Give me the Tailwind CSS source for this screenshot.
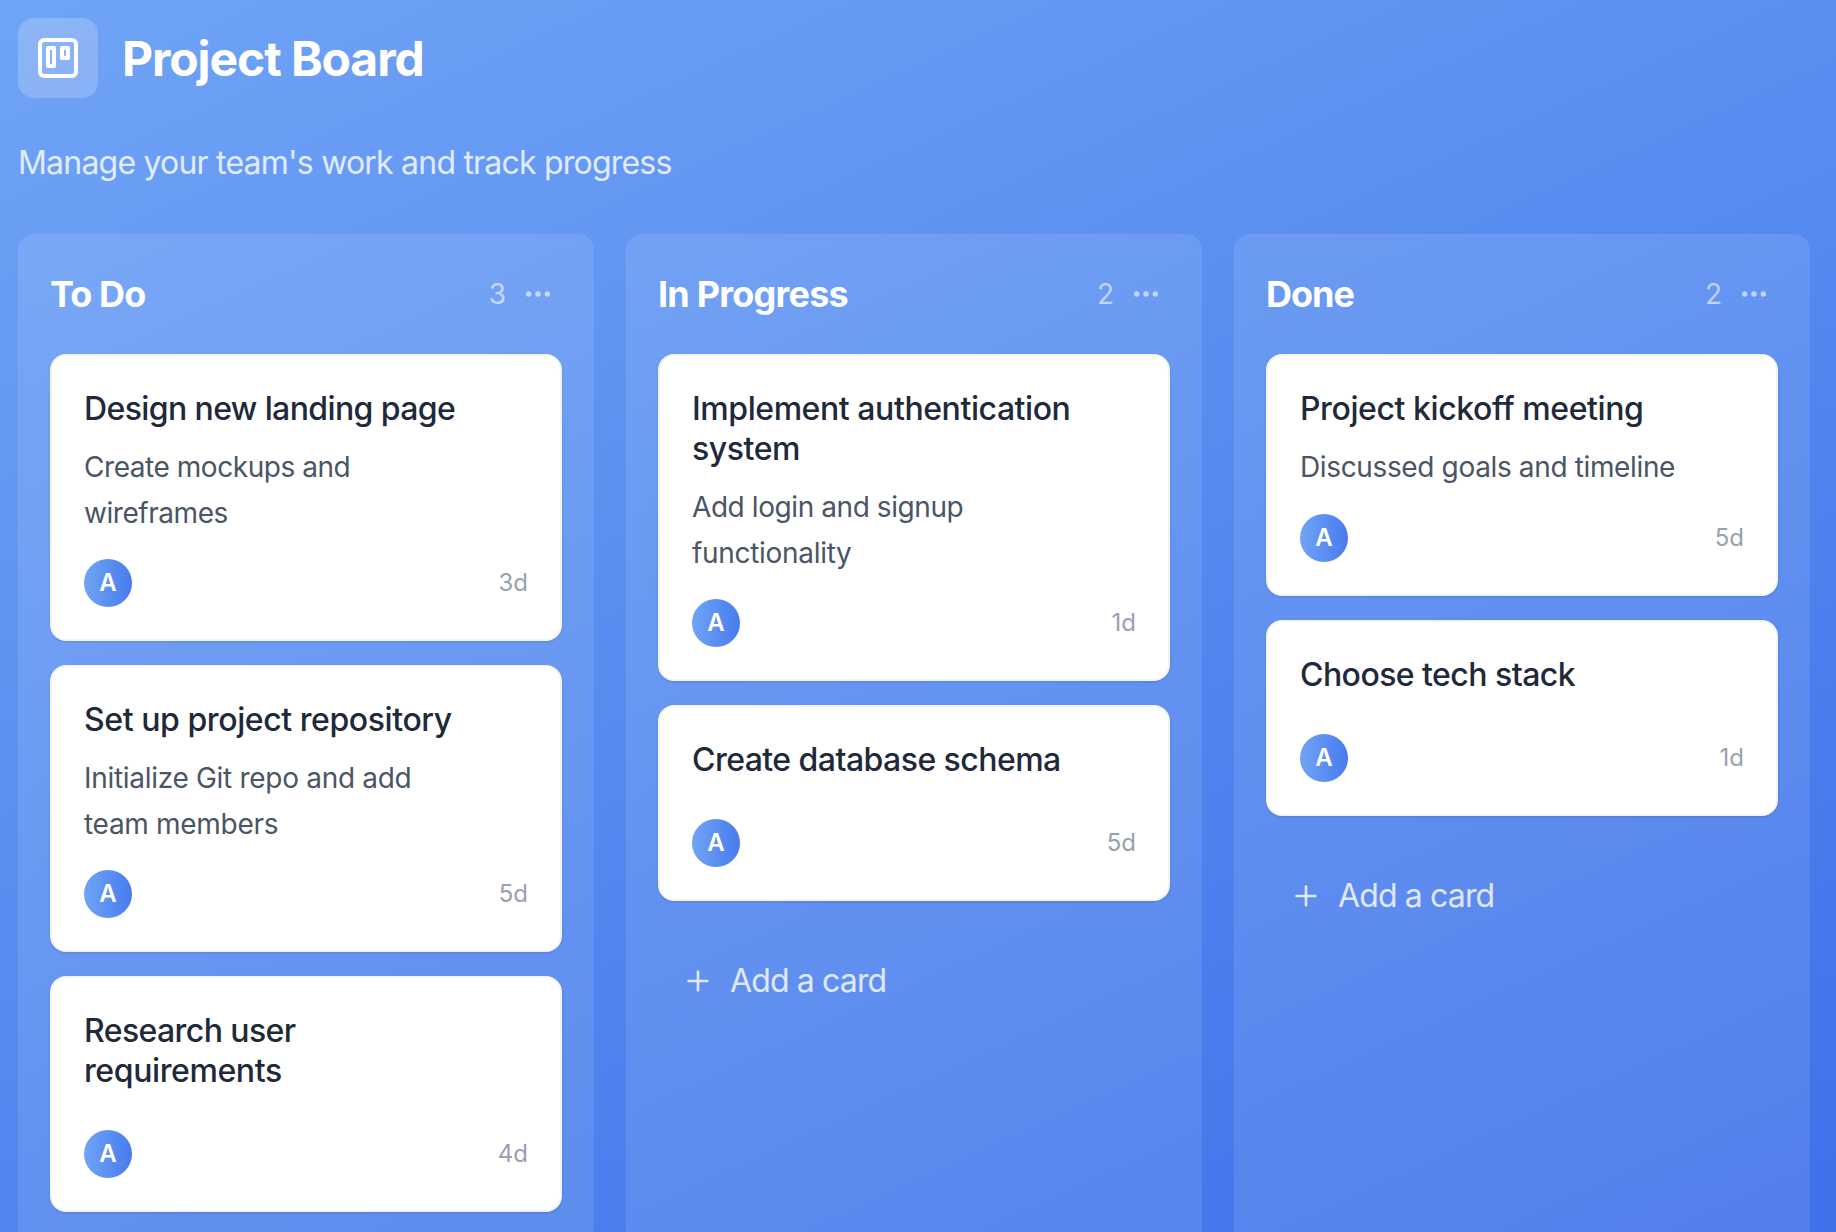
<!DOCTYPE html>
<html lang="en">
<head>
<meta charset="utf-8">
<title>Project Board</title>
<script src="https://cdn.jsdelivr.net/npm/@tailwindcss/browser@4"></script>
</head>
<body class="h-[1232px] overflow-hidden font-['Inter',sans-serif]">
<svg class="hidden">
  <symbol id="dots" viewBox="0 0 24 24" fill="none" stroke="currentColor" stroke-width="2"><circle cx="5" cy="12" r="1"/><circle cx="12" cy="12" r="1"/><circle cx="19" cy="12" r="1"/></symbol>
  <symbol id="plus" viewBox="0 0 24 24" fill="none" stroke="currentColor" stroke-width="2" stroke-linecap="round"><path d="M5 12h14M12 5v14"/></symbol>
</svg>
<div class="h-[1232px] overflow-hidden bg-[linear-gradient(155.5deg,#70a4f6_0%,#5085ef_60%,#4070e9_100%)] px-[18px] pt-[18px]">
  <header>
    <div class="flex items-center gap-6">
      <div class="flex size-20 items-center justify-center rounded-2xl bg-white/20">
        <svg class="size-12 text-white" viewBox="0 0 24 24" fill="none" stroke="currentColor" stroke-width="2" stroke-linecap="round" stroke-linejoin="round"><rect x="3" y="3" width="18" height="18" rx="2"/><rect x="7" y="7" width="3" height="9"/><rect x="14" y="7" width="3" height="5"/></svg>
      </div>
      <h1 class="pt-0.5 text-[48px] leading-[64px] font-bold tracking-[-1.1px] text-white">Project Board</h1>
    </div>
    <p class="mt-10 pt-px text-[32px] leading-[47px] tracking-[-0.79px] text-white/80">Manage your team's work and track progress</p>
  </header>

  <main class="mt-12 flex h-[1166px] gap-8">
    <section class="w-[576px] shrink-0 rounded-2xl bg-white/10 px-8 pt-8">
      <div class="flex h-14 items-center justify-between">
        <h2 class="text-[36px] font-bold tracking-[-0.9px] text-white">To Do</h2>
        <div class="flex items-center gap-2 text-white/60"><span class="text-[28px]">3</span><button class="p-2"><svg class="size-8"><use href="#dots"/></svg></button></div>
      </div>
      <div class="mt-8 flex flex-col gap-6">
        <article class="rounded-2xl border-2 border-gray-100 bg-white p-8 shadow-sm">
          <h3 class="mb-[15px] pt-px text-[32px] leading-10 font-medium tracking-[-0.61px] text-gray-800">Design new landing page</h3>
          <p class="mb-[23px] pt-px text-[28px] leading-[45.5px] tracking-[-0.45px] text-gray-600">Create mockups and<br>wireframes</p>
          <div class="flex items-center justify-between"><span class="flex size-12 items-center justify-center rounded-full bg-linear-to-r/srgb from-[#70a4f6] to-[#477bed] text-[24px] font-semibold text-white">A</span><span class="text-[24px] text-gray-400">3d</span></div>
        </article>
        <article class="rounded-2xl border-2 border-gray-100 bg-white p-8 shadow-sm">
          <h3 class="mb-[15px] pt-px text-[32px] leading-10 font-medium tracking-[-0.42px] text-gray-800">Set up project repository</h3>
          <p class="mb-[23px] pt-px text-[28px] leading-[45.5px] tracking-[-0.3px] text-gray-600">Initialize Git repo and add<br>team members</p>
          <div class="flex items-center justify-between"><span class="flex size-12 items-center justify-center rounded-full bg-linear-to-r/srgb from-[#70a4f6] to-[#477bed] text-[24px] font-semibold text-white">A</span><span class="text-[24px] text-gray-400">5d</span></div>
        </article>
        <article class="rounded-2xl border-2 border-gray-100 bg-white p-8 shadow-sm">
          <h3 class="mb-[39px] pt-px text-[32px] leading-10 font-medium text-gray-800"><span class="tracking-[-0.6px]">Research user</span><br><span class="tracking-[-0.4px]">requirements</span></h3>
          <div class="flex items-center justify-between"><span class="flex size-12 items-center justify-center rounded-full bg-linear-to-r/srgb from-[#70a4f6] to-[#477bed] text-[24px] font-semibold text-white">A</span><span class="text-[24px] text-gray-400">4d</span></div>
        </article>
      </div>
    </section>

    <section class="w-[576px] shrink-0 rounded-2xl bg-white/10 px-8 pt-8">
      <div class="flex h-14 items-center justify-between">
        <h2 class="text-[36px] font-bold tracking-[-0.78px] text-white">In Progress</h2>
        <div class="flex items-center gap-2 text-white/60"><span class="text-[28px]">2</span><button class="p-2"><svg class="size-8"><use href="#dots"/></svg></button></div>
      </div>
      <div class="mt-8 flex flex-col gap-6">
        <article class="rounded-2xl border-2 border-gray-100 bg-white p-8 shadow-sm">
          <h3 class="mb-[15px] pt-px text-[32px] leading-10 font-medium tracking-[-0.43px] text-gray-800">Implement authentication<br>system</h3>
          <p class="mb-[23px] pt-px text-[28px] leading-[45.5px] text-gray-600"><span class="tracking-[-0.42px]">Add login and signup</span><br><span class="tracking-[-0.3px]">functionality</span></p>
          <div class="flex items-center justify-between"><span class="flex size-12 items-center justify-center rounded-full bg-linear-to-r/srgb from-[#70a4f6] to-[#477bed] text-[24px] font-semibold text-white">A</span><span class="text-[24px] text-gray-400">1d</span></div>
        </article>
        <article class="rounded-2xl border-2 border-gray-100 bg-white p-8 shadow-sm">
          <h3 class="mb-[39px] pt-px text-[32px] leading-10 font-medium tracking-[-0.55px] text-gray-800">Create database schema</h3>
          <div class="flex items-center justify-between"><span class="flex size-12 items-center justify-center rounded-full bg-linear-to-r/srgb from-[#70a4f6] to-[#477bed] text-[24px] font-semibold text-white">A</span><span class="text-[24px] text-gray-400">5d</span></div>
        </article>
      </div>
      <button class="mt-8 flex h-24 w-full items-center gap-4 px-6 text-[32px] tracking-[-0.86px] text-white/80"><svg class="size-8"><use href="#plus"/></svg><span>Add a card</span></button>
    </section>

    <section class="w-[576px] shrink-0 rounded-2xl bg-white/10 px-8 pt-8">
      <div class="flex h-14 items-center justify-between">
        <h2 class="text-[36px] font-bold tracking-[-1px] text-white">Done</h2>
        <div class="flex items-center gap-2 text-white/60"><span class="text-[28px]">2</span><button class="p-2"><svg class="size-8"><use href="#dots"/></svg></button></div>
      </div>
      <div class="mt-8 flex flex-col gap-6">
        <article class="rounded-2xl border-2 border-gray-100 bg-white p-8 shadow-sm">
          <h3 class="mb-[15px] pt-px text-[32px] leading-10 font-medium tracking-[-0.41px] text-gray-800">Project kickoff meeting</h3>
          <p class="mb-[23px] pt-px text-[28px] leading-[45.5px] tracking-[-0.36px] text-gray-600">Discussed goals and timeline</p>
          <div class="flex items-center justify-between"><span class="flex size-12 items-center justify-center rounded-full bg-linear-to-r/srgb from-[#70a4f6] to-[#477bed] text-[24px] font-semibold text-white">A</span><span class="text-[24px] text-gray-400">5d</span></div>
        </article>
        <article class="rounded-2xl border-2 border-gray-100 bg-white p-8 shadow-sm">
          <h3 class="mb-[39px] pt-px text-[32px] leading-10 font-medium tracking-[-0.55px] text-gray-800">Choose tech stack</h3>
          <div class="flex items-center justify-between"><span class="flex size-12 items-center justify-center rounded-full bg-linear-to-r/srgb from-[#70a4f6] to-[#477bed] text-[24px] font-semibold text-white">A</span><span class="text-[24px] text-gray-400">1d</span></div>
        </article>
      </div>
      <button class="mt-8 flex h-24 w-full items-center gap-4 px-6 text-[32px] tracking-[-0.86px] text-white/80"><svg class="size-8"><use href="#plus"/></svg><span>Add a card</span></button>
    </section>
  </main>
</div>
</body>
</html>
